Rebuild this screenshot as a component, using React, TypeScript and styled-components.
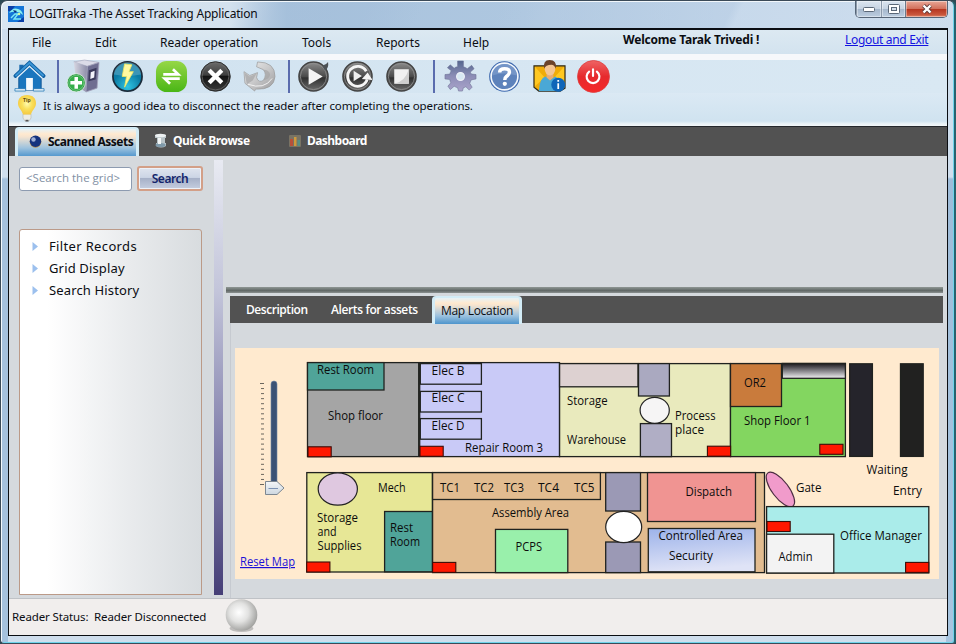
import React from "react";
import styled, { createGlobalStyle } from "styled-components";

const Global = createGlobalStyle`
  * { box-sizing: border-box; }
  html, body { margin: 0; padding: 0; overflow: hidden; }
  body { background: #2d4a55; font-family: "Noto Sans", "Open Sans", sans-serif; color: #0b0d12; }
`;

const Frame = styled.div`
  width: 956px;
  height: 644px;
  display: flex;
  flex-direction: column;
  padding: 1px 8px 8px 8px;
  border: 1px solid #3b4a58;
  border-right: 2px solid #25636f;
  border-radius: 7px 7px 4px 4px;
  box-shadow: inset 1px 1px 0 #f2f7fb, inset -1px -1px 0 #6fd3ea;
  background:
    linear-gradient(#0000 0 176px, #a5c1dd 178px) 0 0 / 7px 100% no-repeat,
    linear-gradient(#0000 0 176px, #9ebcd9 178px, #a8c5e0) 100% 0 / 8px 100% no-repeat,
    linear-gradient(115deg, #0000 25%, #9fbbd855 29% 38%, #0000 44% 52%, #b9cee455 57% 76%, #d6e4f255 77%) 0 0 / 100% 28px no-repeat,
    linear-gradient(90deg, #d9e6f1 0, #d3e1ee 24%, #a9c3dd 30%, #aec7e0 55%, #bfd3e8 75%, #c9daeb 100%) 0 0 / 100% 28px no-repeat,
    #cfdeed;
`;

const TitleBar = styled.header`
  height: 26px;
  flex: none;
  display: flex;
  align-items: flex-start;
`;

const TitleIcon = styled.div`
  width: 16px;
  height: 16px;
  margin: 4px 5px 0 -1px;
  svg { display: block; }
`;

const Title = styled.div`
  font-size: 12px;
  line-height: 16px;
  margin-top: 4px;
  letter-spacing: -0.2px;
  flex: 1;
  white-space: nowrap;
`;

const WindowButtons = styled.div`
  display: flex;
  height: 17px;
  width: 93px;
  margin: -1px -2px 0 0;
  border: 1px solid #566577;
  border-top: 0;
  border-radius: 0 0 5px 5px;
  overflow: hidden;
`;

const WindowButton = styled.button<{ $w: number; $close?: boolean }>`
  width: ${(p) => p.$w}px;
  padding: 0;
  border: 0;
  border-left: ${(p) => (p.$close ? "1px solid #6b7a8c" : "1px solid #8c9aab")};
  display: grid;
  place-items: center;
  background: ${(p) =>
    p.$close
      ? "linear-gradient(#e9a797 0, #d2705c 48%, #b63620 52%, #c9563c 85%, #e0866a)"
      : "linear-gradient(#dbe5f0 0, #c7d4e3 48%, #a6b8cd 52%, #bccde0)"};
  box-shadow: inset 0 0 0 1px #ffffff66;
`;

const Client = styled.main`
  flex: 1;
  min-height: 0;
  border: solid #0a0d12;
  border-width: 2px 1px 2px 1px;
  display: flex;
  flex-direction: column;
  margin: 0 -1px -1px -1px;
  width: 940px;
  background: #d5d9dd;
`;

const MenuBar = styled.nav`
  height: 24px;
  flex: none;
  display: flex;
  padding-left: 23px;
  background: linear-gradient(#dce9f2, #d3e3ef);
`;

const MenuItem = styled.span<{ $w: number }>`
  width: ${(p) => p.$w}px;
  font-size: 12px;
  line-height: 26px;
  white-space: nowrap;
`;

const Welcome = styled.strong`
  width: 222px;
  font-size: 12px;
  line-height: 20px;
  letter-spacing: -0.2px;
  white-space: nowrap;
`;

const Link = styled.a`
  color: #1414e0;
  text-decoration: underline;
  font-size: 12px;
  line-height: 20px;
  letter-spacing: -0.32px;
  white-space: nowrap;
`;

const ToolBar = styled.div`
  height: 39px;
  flex: none;
  border-top: 6px solid #f6f8fb;
  background: linear-gradient(90deg, #cfe1ef, #d6e6f2 50%, #d9e8f3);
  display: flex;
  padding-left: 4px;
`;

const Tool = styled.span<{ $w?: number }>`
  width: ${(p) => p.$w ?? 44}px;
  height: 33px;
  flex: none;
  svg { display: block; overflow: visible; }
`;

const Divider = styled.i<{ $w: number }>`
  width: ${(p) => p.$w}px;
  height: 33px;
  flex: none;
  border-left: 2px solid #5a6cae;
`;

const TipBar = styled.div`
  height: 33px;
  flex: none;
  display: flex;
  background: linear-gradient(#dbe9f4, #d0e3f0 85%, #e6f0f6 92%, #f4f8fa);
  padding-left: 8px;
  svg { flex: none; overflow: visible; }
`;

const Tip = styled.span`
  font-size: 11.5px;
  line-height: 26px;
  margin-left: 6px;
  letter-spacing: -0.1px;
  white-space: nowrap;
`;

const TabBar = styled.div`
  height: 30px;
  flex: none;
  display: flex;
  border-top: 1px solid #24272c;
  background: #525252;
`;

const tabFace = `
  background: linear-gradient(#e6f2f7 0, #ffe9cf 5px, #f5e4d0 28%, #9dc2de 68%, #4d94cc);
  border: solid #d3ecf6;
  border-width: 2px 3px 0 3px;
  border-radius: 4px 4px 0 0;
  color: #0b0d12;
`;

const MainTab = styled.button<{ $w: number; $active?: boolean; $gap?: number; $pad: number; $ls: number }>`
  width: ${(p) => p.$w}px;
  height: ${(p) => (p.$active ? 30 : 28)}px;
  margin-left: ${(p) => p.$gap ?? 0}px;
  padding: 0 0 ${(p) => (p.$active ? 3 : 0)}px ${(p) => p.$pad}px;
  border: 0;
  background: none;
  color: #fff;
  display: flex;
  align-items: center;
  font: 700 12px/26px "Noto Sans", "Open Sans", sans-serif;
  letter-spacing: ${(p) => p.$ls}px;
  white-space: nowrap;
  svg { flex: none; margin-right: 6px; }
  ${(p) => (p.$active ? tabFace : "")}
`;

const Body = styled.div`
  height: 443px;
  flex: none;
  display: flex;
  background: #d5d9dd;
  border-bottom: 1px solid #bfc2c6;
`;

const Sidebar = styled.aside`
  width: 205px;
  padding: 10px 0 3px 10px;
  display: flex;
  flex-direction: column;
`;

const SearchRow = styled.div`
  display: flex;
  align-items: center;
  gap: 5px;
  height: 25px;
`;

const SearchInput = styled.input`
  width: 113px;
  height: 24px;
  border: 1px solid #8d9bb0;
  border-radius: 3px;
  padding: 0 0 2px 6px;
  font: 11.5px "Open Sans", sans-serif;
  letter-spacing: 0;
  &::placeholder { color: #8290a3; opacity: 1; }
`;

const SearchButton = styled.button`
  width: 66px;
  height: 25px;
  padding: 0;
  border: 2px solid #d39f87;
  border-radius: 3px;
  box-shadow: inset 0 0 0 1px #edf1f8;
  background: linear-gradient(#dfe4ee 0, #ccd5e5 45%, #a7b1c8 50%, #c5cee0);
  color: #12246b;
  font: 600 12px "Noto Sans", "Open Sans", sans-serif;
  letter-spacing: -0.45px;
`;

const Tree = styled.ul`
  list-style: none;
  margin: 38px 0 0;
  padding: 5px 0 0 12px;
  width: 183px;
  flex: 1;
  border: 1px solid #bb9a88;
  border-radius: 3px 3px 0 0;
  background: linear-gradient(90deg, #fff 15%, #e9ebed 60%, #d8dcdf);
`;

const TreeItem = styled.li<{ $ls: number }>`
  display: flex;
  align-items: center;
  height: 22px;
  font-size: 13px;
  letter-spacing: ${(p) => p.$ls}px;
  svg { margin-right: 10px; }
`;

const VSplitter = styled.div`
  width: 9px;
  margin: 4px 3px 3px 0;
  background: linear-gradient(#e8eaf2, #c3c5da 30%, #8482ad 65%, #463f77);
`;

const Content = styled.section`
  flex: 1;
  display: flex;
  flex-direction: column;
`;

const HSplitter = styled.div`
  height: 6px;
  width: 717px;
  margin: 131px 0 3px 0;
  background: linear-gradient(#8f9794, #616866 60%, #8b9190);
`;

const SubTabs = styled.div`
  height: 27px;
  width: 713px;
  margin-left: 4px;
  background: #525252;
  display: flex;
`;

const SubTab = styled.button<{ $w: number; $ls: number; $active?: boolean; $pad: number }>`
  width: ${(p) => p.$w}px;
  height: 28px;
  border: 0;
  background: none;
  padding: 0 0 1px ${(p) => p.$pad}px;
  text-align: left;
  color: #fff;
  font: ${(p) => (p.$active ? 400 : 600)} 12px/${(p) => (p.$active ? 24 : 26)}px "Open Sans", sans-serif;
  letter-spacing: ${(p) => p.$ls}px;
  white-space: nowrap;
  ${(p) => (p.$active ? tabFace : "")}
`;

const SubPage = styled.div`
  flex: 1;
  width: 713px;
  margin-left: 4px;
  border-left: 1px solid #c6cad0;
  padding: 25px 0 0 4px;
  svg { display: block; }
`;

const StatusBar = styled.footer`
  flex: 1;
  background: #f1eeed;
  display: flex;
  padding-left: 3px;
  font-size: 11.5px;
  line-height: 36px;
  letter-spacing: -0.13px;
  white-space: pre;
  svg { margin-left: 19px; }
`;

const StatusText = styled.span`
  width: 193px;
`;

type RoomProps = { x: number; y: number; r: number; b: number; fill: string };
const Room = ({ x, y, r, b, fill }: RoomProps) => (
  <rect x={x} y={y} width={r - x} height={b - y} fill={fill} stroke="#20221f" strokeWidth={1.3} />
);
const Reader = ({ x, y }: { x: number; y: number }) => (
  <rect x={x} y={y} width={23.2} height={10} fill="#ff1800" stroke="#3a0d08" strokeWidth={1.1} />
);

const labels: [string, number, number, number][] = [
  ["Rest Room", 317, 374, 57], ["Shop floor", 328, 420, 55],
  ["Elec B", 431.5, 375, 33], ["Elec C", 431.5, 402, 33], ["Elec D", 431.5, 430, 33],
  ["Repair Room 3", 465, 452, 78], ["Storage", 567, 405, 40.5], ["Warehouse", 567, 444, 59],
  ["Process", 675, 420, 40.5], ["place", 675, 434, 29], ["OR2", 744, 387, 22],
  ["Shop Floor 1", 744, 425, 66.5], ["Waiting", 866.5, 474, 41], ["Entry", 893, 495, 29],
  ["Gate", 796, 492, 25.5], ["Office Manager", 840, 540, 82], ["Admin", 778.5, 561, 34],
  ["Mech", 378, 492, 27.5], ["Storage", 317, 522, 41], ["and", 317.5, 536, 19],
  ["Supplies", 317.5, 550, 44], ["Rest", 390, 532, 23], ["Room", 390, 546, 30],
  ["TC1", 440, 492, 20], ["TC2", 474, 492, 20], ["TC3", 504, 492, 20],
  ["TC4", 538, 492, 21], ["TC5", 574, 492, 20.5], ["Assembly Area", 492, 517, 77],
  ["PCPS", 515.5, 551, 26.5], ["Dispatch", 685.5, 496, 46.5],
  ["Controlled Area", 658.5, 540, 84.5], ["Security", 669, 560, 44],
];

const readers: [number, number][] = [
  [308, 446.8], [420, 446.3], [707.4, 446.2], [819.8, 444.3], [767, 521.5], [905.6, 562.4],
  [306.7, 562], [432.6, 562.4],
];

const FloorMap = () => (
  <svg width="704" height="231" viewBox="235 348 704 231">
    <defs>
      <linearGradient id="awning" x2="0" y2="1"><stop stopColor="#1b1a1c" /><stop offset=".25" stopColor="#4e4c52" /><stop offset="1" stopColor="#f2f2f4" /></linearGradient>
      <linearGradient id="ctrl" x2="0.2" y2="1"><stop stopColor="#9db3ea" /><stop offset="1" stopColor="#dfe3f6" /></linearGradient>
      <linearGradient id="thumb" x2="0" y2="1"><stop stopColor="#f4f6f8" /><stop offset="1" stopColor="#cdd7e0" /></linearGradient>
    </defs>
    <rect x="235" y="348" width="704" height="231" fill="#ffeacf" />
    {Array.from({ length: 21 }, (_, i) => (
      <rect key={i} x={i % 20 ? 261 : 260} y={383 + i * 5.05} width={i % 20 ? 3 : 4} height="1" fill="#6b665e" />
    ))}
    <rect x="271" y="381" width="6" height="108" rx="3" fill="#3b5275" stroke="#7187a5" strokeWidth=".6" />
    <path d="M265.5 481.5H277L284 488L277 494.5H265.5Z" fill="url(#thumb)" stroke="#7d8791" />
    <path d="M268.5 488.5H278" stroke="#7d93b5" />
    <Room x={307.5} y={362.6} r={418.7} b={456.6} fill="#a5a5a5" />
    <Room x={307.5} y={362.6} r={384} b={390} fill="#50a499" />
    <Room x={419.7} y={362.6} r={559.5} b={456.6} fill="#c9caf7" />
    {[363.6, 391.4, 418.6].map((y) => <Room key={y} x={420.3} y={y} r={481.4} b={y + 20.6} fill="#c9caf7" />)}
    <Room x={559.6} y={363.6} r={730.5} b={456.6} fill="#e9eabd" />
    <Room x={559.6} y={363.6} r={638} b={386.8} fill="#ddd1d1" />
    <Room x={638.5} y={363.6} r={669.4} b={396} fill="#aaa9c0" />
    <Room x={640.4} y={423.6} r={671.5} b={456.6} fill="#b0aec5" />
    <ellipse cx="654.7" cy="410.3" rx="14.6" ry="13" fill="#f6f5f5" stroke="#222" strokeWidth="1.2" />
    <Room x={730.5} y={363.6} r={845.4} b={456.6} fill="#83d660" />
    <Room x={730.5} y={363.6} r={781.5} b={406.5} fill="#c97b3c" />
    <Room x={782.3} y={363.4} r={845.4} b={378.3} fill="url(#awning)" />
    <Room x={849.7} y={363.8} r={872.4} b={456.4} fill="#25242b" />
    <Room x={900.5} y={363.8} r={923.2} b={456.4} fill="#212120" />
    <Room x={306.8} y={472.6} r={432.4} b={572} fill="#e7e796" />
    <Room x={384.6} y={511.5} r={432.4} b={571.8} fill="#50a499" />
    <ellipse cx="337.8" cy="489" rx="19.6" ry="16.2" fill="#dfc8e0" stroke="#222" strokeWidth="1.2" />
    <Room x={432.6} y={472.6} r={764.5} b={572.6} fill="#e2bc90" />
    <Room x={432.6} y={472.6} r={600.4} b={499.5} fill="#e2bc90" />
    <Room x={495.5} y={529.4} r={567.8} b={572.6} fill="#99f0ab" />
    <Room x={605.7} y={472.6} r={640.5} b={511} fill="#9b99b5" />
    <Room x={605.7} y={542} r={640.5} b={572.6} fill="#9b99b5" />
    <ellipse cx="623.7" cy="527" rx="18" ry="15.6" fill="#fff" stroke="#222" strokeWidth="1.2" />
    <Room x={647.5} y={472.6} r={755.5} b={521.5} fill="#f09492" />
    <Room x={648.3} y={528.5} r={755} b={571.8} fill="url(#ctrl)" />
    <ellipse cx="780.4" cy="489.5" rx="20.8" ry="8.3" transform="rotate(53 780.4 489.5)" fill="#f19bcb" stroke="#4c2d42" strokeWidth="1.2" />
    <Room x={766.6} y={506.6} r={928.8} b={573} fill="#aaecea" />
    <Room x={766.6} y={534.2} r={833.8} b={573} fill="#f3f3f3" />
    {readers.map(([x, y]) => <Reader key={`${x}-${y}`} x={x} y={y} />)}
    <g fontFamily='"Open Sans", sans-serif' fontSize="11.8" fill="#0c0c0c">
      {labels.map(([t, x, y, w]) => (
        <text key={`${t}${x}${y}`} x={x} y={y} textLength={w} lengthAdjust="spacingAndGlyphs">{t}</text>
      ))}
      <text x="240" y="566" textLength="55" lengthAdjust="spacingAndGlyphs" fill="#1a10d8" textDecoration="underline">Reset Map</text>
    </g>
  </svg>
);

const AppLogo = () => (
  <svg width="16" height="16" viewBox="0 0 16 16">
    <rect width="16" height="16" fill="#1476d8" />
    <path d="M0 0H7L3 5H0ZM9 16H16V11Z" fill="#0a3fa8" />
    <path d="M1 7Q5 1 10 3Q14 4 15 9Q12 6 9 6Q5 5 1 7Z" fill="#8af0f0" />
    <path d="M3 12L7 8H10L6 13H13" fill="none" stroke="#7ceaf5" strokeWidth="1.4" />
    <path d="M5 4L9 5L7 7" fill="#0c2f7c" /><circle cx="11" cy="8" r="1.3" fill="#d4f7a0" />
  </svg>
);

const HomeIcon = () => (
  <svg width="33" height="33" viewBox="0 0 34 34">
    <path d="M6 16V31H29V16L17 6Z" fill="#1a76be" stroke="#0d5594" />
    <path d="M6.500 5H11V10L6.500 14Z" fill="#1a6bb0" />
    <path d="M2.500 16.500L17 3L31.500 16.500" fill="none" stroke="#0f5fa3" strokeWidth="4" strokeLinecap="round" />
    <path d="M2.500 16.500L17 3L31.500 16.500" fill="none" stroke="#3a95d5" strokeWidth="2" />
    <path d="M4 18.500L17 6.500L30 18.500" fill="none" stroke="#e9f5fd" strokeWidth="1.200" />
    <path d="M13.500 31V18.500H20.500V31" fill="#f5fafd" />
    <path d="M2 29.500H13V32H2ZM21 29.500H32V32H21Z" fill="#e8f2f8" stroke="#2478b7" strokeWidth=".8" />
  </svg>
);

const ReaderAddIcon = () => (
  <svg width="33" height="33" viewBox="0 0 34 34">
    <defs><linearGradient id="srv"><stop stopColor="#d7d7e2" /><stop offset="1" stopColor="#8c8ca8" /></linearGradient></defs>
    <path d="M7 2L18 0L33 2.500L21 6.500Z" fill="#dcdce8" stroke="#a4a4b8" strokeWidth=".6" />
    <path d="M7 2L21 6.500L19.500 33L10 27Z" fill="url(#srv)" />
    <path d="M21 6.500L33 2.500L31 29L19.500 33Z" fill="#6f6e91" stroke="#a6a6bd" strokeWidth=".8" />
    <path d="M22.500 10.500L30.500 8L29.500 20L22 22Z" fill="#3b3a5c" /><path d="M24.500 12.500L28.500 11L28 18L24 19.500Z" fill="#f2f2fa" />
    <circle cx="9.500" cy="23.500" r="9.400" fill="#2b9a42" stroke="#e4f3e6" strokeWidth=".8" />
    <circle cx="9.500" cy="23.500" r="7.800" fill="#35ad4a" stroke="#8fd49b" strokeWidth=".6" />
    <path d="M9.500 17.500V29.500M3.500 23.500H15.500" stroke="#fff" strokeWidth="3.600" />
  </svg>
);

const BoltIcon = () => (
  <svg width="33" height="33" viewBox="0 0 34 34">
    <defs><radialGradient id="bolt" cy=".85"><stop stopColor="#2fc4e2" /><stop offset="1" stopColor="#0b7ba4" /></radialGradient></defs>
    <circle cx="17" cy="17" r="15" fill="url(#bolt)" stroke="#1b2c3b" strokeWidth="1.800" />
    <path d="M3 15A14 13 0 0 1 31 15Q17 18 3 15Z" fill="#fff" opacity=".2" />
    <path d="M14 4L21.500 5L18.500 12H23L14 28L16 17H11.500Z" fill="#fff9a0" stroke="#f2e75a" strokeWidth=".8" />
  </svg>
);

const ConnectIcon = () => (
  <svg width="33" height="33" viewBox="0 0 34 34">
    <defs><linearGradient id="grn" x2="0" y2="1"><stop stopColor="#96d746" /><stop offset="1" stopColor="#4ab616" /></linearGradient></defs>
    <rect x="1" y="1" width="32" height="32" rx="11" fill="url(#grn)" />
    <path d="M8.500 14.800H24L18.500 9.500M25.500 19.200H10L15.500 24.500" fill="none" stroke="#fff" strokeWidth="2.800" />
  </svg>
);

const DarkButton = ({ children }: { children: React.ReactNode }) => (
  <svg width="33" height="33" viewBox="0 0 34 34">
    <defs><linearGradient id="dark" x2="0" y2="1"><stop stopColor="#8d8d8d" /><stop offset=".5" stopColor="#4a4a4a" /><stop offset=".55" stopColor="#303030" /><stop offset="1" stopColor="#6e6e6e" /></linearGradient></defs>
    <circle cx="17" cy="17" r="15" fill="url(#dark)" stroke="#444" strokeWidth="1.500" />
    <circle cx="17" cy="17" r="13.500" fill="none" stroke="#8e8e8e" strokeWidth=".9" />
    {children}
  </svg>
);

const CancelIcon = () => (
  <svg width="33" height="33" viewBox="0 0 34 34">
    <defs><linearGradient id="cancel" x2="0" y2="1"><stop stopColor="#6b6b6b" /><stop offset=".45" stopColor="#3f3f3f" /><stop offset=".5" stopColor="#141414" /><stop offset="1" stopColor="#3a3a3a" /></linearGradient></defs>
    <circle cx="17" cy="17" r="15.200" fill="url(#cancel)" stroke="#2a2a2a" strokeWidth="1" />
    <circle cx="17" cy="17" r="13.800" fill="none" stroke="#6a6a6a" strokeWidth=".8" />
    <path d="M10.500 10.500L23.500 23.500M23.500 10.500L10.500 23.500" stroke="#fff" strokeWidth="4.400" />
  </svg>
);

const UndoIcon = () => (
  <svg width="33" height="33" viewBox="0 0 34 34">
    <defs><linearGradient id="undo" x2="1" y2="1"><stop stopColor="#efefef" /><stop offset=".5" stopColor="#c9c9ca" /><stop offset="1" stopColor="#9a9a9c" /></linearGradient></defs>
    <path d="M15 2Q33 2 33 17Q32 31 13 30L12 32L2 24L1 12L7 16L15 13L14 18Q16 24 21 21Q25 15 21 10L14 7Z" fill="url(#undo)" stroke="#999" strokeWidth=".7" />
    <path d="M1.500 13L7 17L14 14L10 21L4 25Z" fill="#a9a9aa" opacity=".8" />
    <path d="M5 25Q22 31 30 19" fill="none" stroke="#f3f3f3" strokeWidth="1" />
    <path d="M21 10Q26 15 21 21Q27 20 28 15Q27 10 21 10Z" fill="#a2a2a4" opacity=".6" />
  </svg>
);

const PlayIcon = () => (
  <DarkButton>
    <path d="M26 6Q30 5 32 2Q33 8 29 11Z" fill="#4d5257" />
    <path d="M12 8.500L26.500 17L12 25.500Z" fill="#f4f4f4" />
  </DarkButton>
);

const ReplayIcon = () => (
  <DarkButton>
    <path d="M27 20A10.300 10.300 0 1 1 26 11.500" fill="none" stroke="#f5f5f5" strokeWidth="3" />
    <path d="M21.500 19.500L27.500 13L32.500 20.500Z" fill="#f5f5f5" />
    <path d="M13 11L21.500 16.500L13 22Z" fill="#f0f0f0" />
  </DarkButton>
);

const StopIcon = () => (
  <DarkButton>
    <path d="M9.500 9.500H24.500V24.500H9.500Z" fill="#f0f0f0" />
    <path d="M24.500 9.500V24.500H9.500Q21 22 24.500 9.500Z" fill="#cfcfcf" />
  </DarkButton>
);

const GearIcon = () => (
  <svg width="33" height="33" viewBox="0 0 34 34">
    <defs><linearGradient id="gear" x2="0" y2="1"><stop stopColor="#54678f" /><stop offset=".5" stopColor="#8c8db6" /><stop offset="1" stopColor="#aaa3cb" /></linearGradient></defs>
    <path d="M14 7L14 1H20L20 7Q22 7.500 24 9L28.500 5.500L31 9L27 12.500Q28 14 28.500 14.500L33 15V19.500L28 20.500Q27.500 22 26.500 24L29 28L26 31L22.500 27.500Q21 28.500 20 28.500L19 32H15L14 28.500Q12 28 10.500 27L6.500 30.500L4 27L7 23.500Q6 21.500 6 20L1 19.500V15L6 14.500Q6.500 12.500 7.500 11L3.500 8L6.500 5L10.500 8.500Q12 7 14 7Z" fill="url(#gear)" stroke="#6f7396" strokeWidth=".6" />
    <circle cx="17" cy="17" r="4" fill="#d8e8f3" stroke="#eef0f8" strokeWidth="1.200" />
  </svg>
);

const HelpIcon = () => (
  <svg width="33" height="33" viewBox="0 0 34 34">
    <circle cx="17" cy="17" r="15.800" fill="#3d68ae" />
    <circle cx="17" cy="17" r="13.800" fill="#5d82bb" stroke="#f4f8fc" strokeWidth="1.700" />
    <path d="M4.500 16A12.500 12 0 0 1 29.500 16Q16 12 4.500 16Z" fill="#83a1cf" opacity=".6" />
    <path d="M12 13Q12 9 17 9Q22.500 9 22 13Q21.800 15 19 17Q17.300 18.300 17.300 20.500" fill="none" stroke="#fff" strokeWidth="3.600" />
    <circle cx="17.300" cy="24.500" r="2.200" fill="#fff" />
  </svg>
);

const ContactIcon = () => (
  <svg width="33" height="33" viewBox="0 0 34 34">
    <path d="M1 6H33V29L28 32H6L1 28Z" fill="#f0ac08" stroke="#2d2a1c" strokeWidth="1.200" />
    <path d="M2 7L12 18L2 27ZM32 7L22 18L32 27Z" fill="#ffc821" />
    <path d="M6 32Q7 18 13 17L18 20L23 17Q29 20 29 32Z" fill="#4aa8d6" />
    <path d="M14 14H21V18L17.500 21L14 18Z" fill="#e7ac77" />
    <ellipse cx="17.500" cy="9" rx="5.500" ry="7" fill="#f3c594" />
    <path d="M11.500 9Q10 0 17 0Q25 0 23.500 9Q22 5 19 5Q13 5 11.500 9Z" fill="#6b432a" />
    <circle cx="26" cy="25.500" r="7.200" fill="#0f65b8" />
    <path d="M26 24V30M26 20.500V22.500" stroke="#fff" strokeWidth="1.800" />
  </svg>
);

const PowerIcon = () => (
  <svg width="33" height="33" viewBox="0 0 34 34">
    <defs><linearGradient id="pow" x2="0" y2="1"><stop stopColor="#ef6464" /><stop offset=".5" stopColor="#e62a2d" /><stop offset="1" stopColor="#f52828" /></linearGradient></defs>
    <circle cx="17" cy="17" r="16.500" fill="url(#pow)" stroke="#dd3d3d" strokeWidth=".8" />
    <path d="M12.500 12A6.600 6.600 0 1 0 20.500 12M16.500 9.500V16.500" fill="none" stroke="#fff" strokeWidth="2.200" strokeLinecap="round" />
  </svg>
);

const BulbIcon = () => (
  <svg width="20" height="29" viewBox="0 0 20 29">
    <defs><radialGradient id="bulb" cy=".45"><stop stopColor="#fffbb0" /><stop offset=".55" stopColor="#f9e05c" /><stop offset="1" stopColor="#f6cd45" /></radialGradient></defs>
    <path d="M6 21H14V25L12 28H8L6 25Z" fill="#ecece4" stroke="#b5b5ad" strokeWidth=".6" />
    <path d="M8.500 26.800H11.500V28.500H8.500Z" fill="#555" />
    <path d="M10 2C4 2 1 5.500 1 10.500C1 15 5 17 6 21.500H14C15 17 19 15 19 10.500C19 5.500 16 2 10 2Z" fill="url(#bulb)" />
    <text x="6" y="9" fontSize="5" fontWeight="700" fontFamily="Open Sans, sans-serif" fill="#5c4a12">Tip</text>
  </svg>
);

const GlobeIcon = () => (
  <svg width="13" height="13" viewBox="0 0 13 13">
    <circle cx="6.500" cy="7" r="5.800" fill="#b98b46" /><circle cx="6.500" cy="6.200" r="5.700" fill="#16337e" />
    <circle cx="4.500" cy="4.500" r="2.200" fill="#c3d0ec" opacity=".8" />
  </svg>
);
const DbIcon = () => (
  <svg width="13" height="16" viewBox="0 0 13 16">
    <path d="M1 2V5H3V10H2V13Q7 16 12 13V10H11V5H12V2Z" fill="#b9c4c8" />
    <ellipse cx="6.500" cy="2.500" rx="5.500" ry="1.800" fill="#edf1f2" /><ellipse cx="6.500" cy="12" rx="5" ry="2" fill="#7f9aaa" />
    <path d="M4 5H7V11H4Z" fill="#f3f6f6" />
  </svg>
);
const ChartIcon = () => (
  <svg width="12" height="12" viewBox="0 0 12 12">
    <rect width="12" height="12" rx="1" fill="#797364" />
    <rect x="1" y="4" width="3" height="7" fill="#b8503a" /><rect x="5" y="2" width="2.500" height="9" fill="#cf9a3c" /><rect x="8.500" y="5" width="2.500" height="6" fill="#568f83" />
  </svg>
);
const Arrow = () => (
  <svg width="7" height="9" viewBox="0 0 7 9"><path d="M.5 0L6 4.500L.5 9Z" fill="#9cc0ee" /></svg>
);
const StatusOrb = () => (
  <svg width="35" height="35" viewBox="0 0 35 35">
    <defs><radialGradient id="orb" cx=".42" cy=".42" r=".6"><stop stopColor="#fff" /><stop offset=".5" stopColor="#e2e2e1" /><stop offset="1" stopColor="#a2a2a0" /></radialGradient></defs>
    <ellipse cx="17.500" cy="29.500" rx="12" ry="3.500" fill="#a8a6a5" opacity=".7" />
    <circle cx="17.500" cy="16" r="15.800" fill="url(#orb)" />
  </svg>
);

const MinimizeGlyph = () => (
  <svg width="12" height="5"><rect x=".5" y=".5" width="11" height="4" rx="1" fill="#fff" stroke="#5b6878" /></svg>
);
const MaximizeGlyph = () => (
  <svg width="12" height="10">
    <rect x=".5" y=".5" width="11" height="9" rx="1" fill="#fff" stroke="#5b6878" />
    <rect x="3.500" y="3.500" width="5" height="3" fill="#d4dfea" stroke="#5b6878" />
  </svg>
);
const CloseGlyph = () => (
  <svg width="12" height="10">
    <path d="M2.500 1.500L9.500 8.500M9.500 1.500L2.500 8.500" stroke="#5c3b3b" strokeWidth="4" />
    <path d="M2.500 1.500L9.500 8.500M9.500 1.500L2.500 8.500" stroke="#fff" strokeWidth="2.400" />
  </svg>
);

export default function App() {
  return (
    <>
      <Global />
      <Frame>
        <TitleBar>
          <TitleIcon><AppLogo /></TitleIcon>
          <Title>LOGITraka -The Asset Tracking Application</Title>
          <WindowButtons>
            <WindowButton $w={25} aria-label="Minimize"><MinimizeGlyph /></WindowButton>
            <WindowButton $w={25} aria-label="Maximize"><MaximizeGlyph /></WindowButton>
            <WindowButton $w={42} $close aria-label="Close"><CloseGlyph /></WindowButton>
          </WindowButtons>
        </TitleBar>
        <Client>
          <MenuBar>
            <MenuItem $w={63}>File</MenuItem>
            <MenuItem $w={65}>Edit</MenuItem>
            <MenuItem $w={142}>Reader operation</MenuItem>
            <MenuItem $w={74}>Tools</MenuItem>
            <MenuItem $w={87}>Reports</MenuItem>
            <MenuItem $w={160}>Help</MenuItem>
            <Welcome>Welcome Tarak Trivedi !</Welcome>
            <Link>Logout and Exit</Link>
          </MenuBar>
          <ToolBar>
            <Tool><HomeIcon /></Tool>
            <Divider $w={10} />
            <Tool><ReaderAddIcon /></Tool>
            <Tool><BoltIcon /></Tool>
            <Tool $w={44}><ConnectIcon /></Tool>
            <Tool><CancelIcon /></Tool>
            <Tool $w={45}><UndoIcon /></Tool>
            <Divider $w={9} />
            <Tool><PlayIcon /></Tool>
            <Tool><ReplayIcon /></Tool>
            <Tool $w={48}><StopIcon /></Tool>
            <Divider $w={11} />
            <Tool><GearIcon /></Tool>
            <Tool $w={45}><HelpIcon /></Tool>
            <Tool><ContactIcon /></Tool>
            <Tool><PowerIcon /></Tool>
          </ToolBar>
          <TipBar><BulbIcon /><Tip>It is always a good idea to disconnect the reader after completing the operations.</Tip></TipBar>
          <TabBar>
            <MainTab $w={124} $gap={6} $pad={11} $ls={-0.5} $active><GlobeIcon />Scanned Assets</MainTab>
            <MainTab $w={135} $pad={15} $ls={-0.4}><DbIcon />Quick Browse</MainTab>
            <MainTab $w={100} $pad={15} $ls={-0.55}><ChartIcon />Dashboard</MainTab>
          </TabBar>
          <Body>
            <Sidebar>
              <SearchRow><SearchInput placeholder="<Search the grid>" /><SearchButton>Search</SearchButton></SearchRow>
              <Tree>
                <TreeItem $ls={0.35}><Arrow />Filter Records</TreeItem>
                <TreeItem $ls={0.15}><Arrow />Grid Display</TreeItem>
                <TreeItem $ls={0.15}><Arrow />Search History</TreeItem>
              </Tree>
            </Sidebar>
            <VSplitter />
            <Content>
              <HSplitter />
              <SubTabs>
                <SubTab $w={85} $pad={16} $ls={-0.45}>Description</SubTab>
                <SubTab $w={117} $pad={16} $ls={-0.38}>Alerts for assets</SubTab>
                <SubTab $w={90} $pad={6} $ls={-0.3} $active>Map Location</SubTab>
              </SubTabs>
              <SubPage><FloorMap /></SubPage>
            </Content>
          </Body>
          <StatusBar><StatusText>Reader Status:  Reader Disconnected</StatusText><StatusOrb /></StatusBar>
        </Client>
      </Frame>
    </>
  );
}
